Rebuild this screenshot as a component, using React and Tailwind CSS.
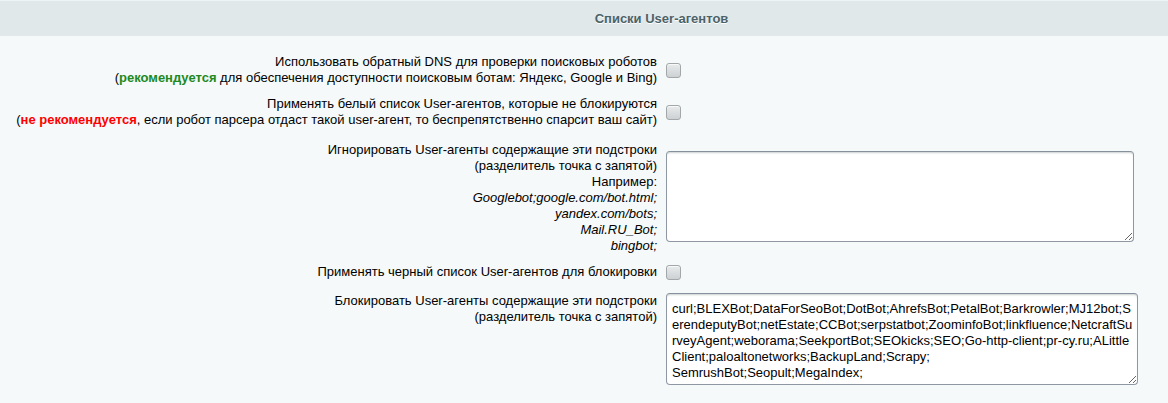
import { useState } from 'react';

const ignoreExamples = ['Googlebot;google.com/bot.html;', 'yandex.com/bots;', 'Mail.RU_Bot;', 'bingbot;'];

const blockList = [
  'curl;BLEXBot;DataForSeoBot;DotBot;AhrefsBot;PetalBot;Barkrowler;MJ12bot;S',
  'erendeputyBot;netEstate;CCBot;serpstatbot;ZoominfoBot;linkfluence;NetcraftSu',
  'rveyAgent;weborama;SeekportBot;SEOkicks;SEO;Go-http-client;pr-cy.ru;ALittle',
  'Client;paloaltonetworks;BackupLand;Scrapy;',
  'SemrushBot;Seopult;MegaIndex;',
].join('\n');

function Checkbox({ checked, onChange }) {
  return (
    <button
      type="button"
      onClick={() => onChange(!checked)}
      className="w-[15px] h-[15px] rounded-[3px] border border-[#a2a7aa] bg-gradient-to-b from-[#e9ebec] to-[#cdd1d3] shadow-[inset_0_1px_0_#f7f8f8] flex items-center justify-center"
    >
      {checked && <span className="text-[10px] leading-none text-[#333]">✓</span>}
    </button>
  );
}

function Row({ label, children, align = 'items-center', className = '' }) {
  return (
    <div className={`flex ${align} ${className}`}>
      <div className="w-[657px] shrink-0 text-right leading-4">{label}</div>
      <div className="pl-[9px]">{children}</div>
    </div>
  );
}

const areaCls =
  'block resize bg-white rounded-[4px] border border-[#8f98a2] border-t-[#87919c] shadow-[inset_0_2px_2px_-1px_rgba(180,188,191,0.7)] outline-none px-[5px] text-[13px] leading-4 text-black font-["Liberation_Sans",Arial,sans-serif]';

export default function App() {
  const [dns, setDns] = useState(false);
  const [white, setWhite] = useState(false);
  const [black, setBlack] = useState(false);
  const [ignore, setIgnore] = useState('');
  const [block, setBlock] = useState(blockList);

  return (
    <div className="w-[1168px] h-[403px] bg-[#f5f9f9] font-['Liberation_Sans',Arial,sans-serif] text-[13px] text-black overflow-hidden">
      <div className="h-[36px] bg-[#e0e8ea] border-t border-[#eef3f4] flex items-center justify-center pl-[155px]">
        <span className="font-bold text-[#4b6267] [text-shadow:0_1px_0_#fff]">Списки User-агентов</span>
      </div>

      <div className="pt-[18px]">
        <Row
          label={
            <>
              Использовать обратный DNS для проверки поисковых роботов
              <br />(<b className="text-[#21891f]">рекомендуется</b> для обеспечения доступности поисковым ботам: Яндекс, Google и Bing)
            </>
          }
        >
          <Checkbox checked={dns} onChange={setDns} />
        </Row>

        <Row
          className="mt-[10px]"
          label={
            <>
              Применять белый список User-агентов, которые не блокируются
              <br />(<b className="text-[#f00]">не рекомендуется</b>, если робот парсера отдаст такой user-агент, то беспрепятственно спарсит ваш сайт)
            </>
          }
        >
          <Checkbox checked={white} onChange={setWhite} />
        </Row>

        <Row
          className="mt-[14px]"
          align="items-start"
          label={
            <>
              Игнорировать User-агенты содержащие эти подстроки
              <br />(разделитель точка с запятой)
              <br />Например:
              {ignoreExamples.map((ex) => (
                <div key={ex} className="italic">{ex}</div>
              ))}
            </>
          }
        >
          <textarea
            value={ignore}
            onChange={(e) => setIgnore(e.target.value)}
            className={`${areaCls} mt-[9px] w-[468px] h-[91px] py-[5px]`}
          />
        </Row>

        <Row className="mt-[10px]" label="Применять черный список User-агентов для блокировки">
          <Checkbox checked={black} onChange={setBlack} />
        </Row>

        <Row
          className="mt-[13px]"
          align="items-start"
          label={
            <>
              Блокировать User-агенты содержащие эти подстроки
              <br />(разделитель точка с запятой)
            </>
          }
        >
          <textarea
            value={block}
            onChange={(e) => setBlock(e.target.value)}
            wrap="off"
            className={`${areaCls} w-[472px] h-[92px] pt-[7px] pb-[4px] whitespace-pre overflow-hidden`}
          />
        </Row>
      </div>
    </div>
  );
}
